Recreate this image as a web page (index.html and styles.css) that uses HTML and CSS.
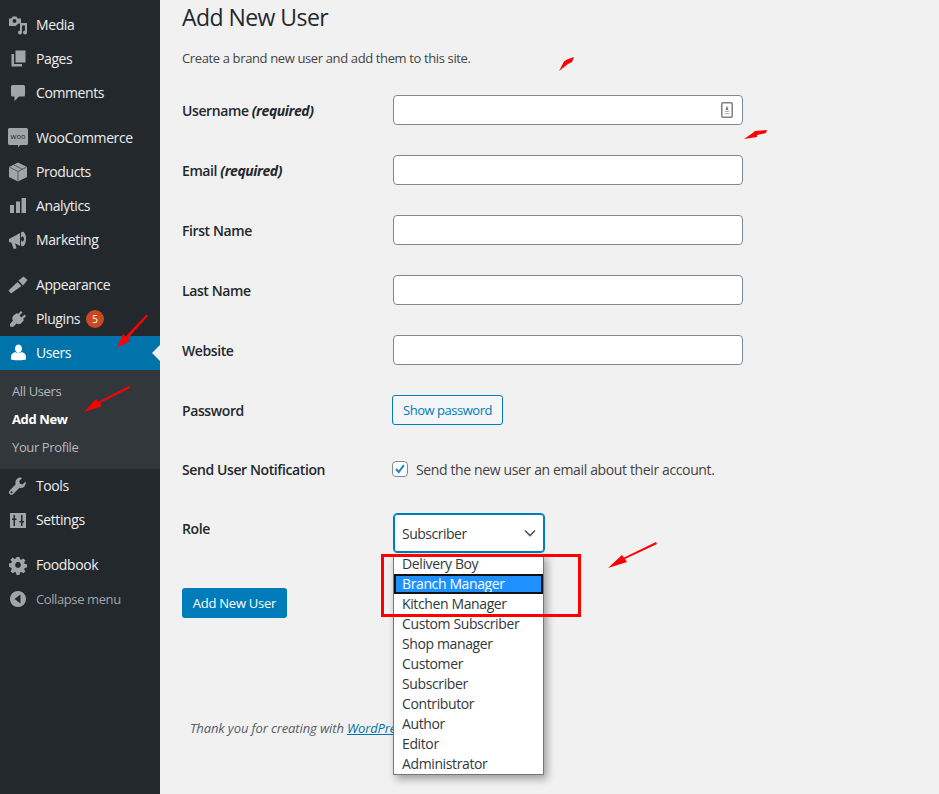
FILE: index.html
```html
<!DOCTYPE html>
<html lang="en">
<head>
<meta charset="utf-8">
<title>Add New User</title>
<link rel="stylesheet" href="styles.css">
</head>
<body>
<div class="page">
  <nav class="sidebar">
    <ul class="menu">
      <li class="item"><svg class="ic" viewBox="0 0 20 20"><path d="M1 3.500h2.500l1-2h4l1 2H13v5h-2.500L7 11.500V11H1zM6.500 4a2 2 0 1 0 .01 0z" fill-rule="evenodd"/><path d="M12 8h7v9.500a2 2 0 1 1-2-2V10.500h-3v7a2 2 0 1 1-2-2z"/></svg>Media</li>
      <li class="item"><svg class="ic" viewBox="0 0 20 20"><path d="M7.500 1.500h10v12h-10z"/><path d="M3.500 5H6v10h8v2.500H3.500z"/></svg>Pages</li>
      <li class="item"><svg class="ic" viewBox="0 0 20 20"><path d="M4.500 2h11A1.500 1.500 0 0 1 17 3.500V12a1.500 1.500 0 0 1-1.500 1.500H11L6.500 18v-4.500h-2A1.500 1.500 0 0 1 3 12V3.500A1.500 1.500 0 0 1 4.500 2z"/></svg>Comments</li>
      <li class="item sep"><svg class="ic" viewBox="0 0 20 20"><path d="M1.500 0h17A1.500 1.500 0 0 1 20 1.500v14a1.500 1.500 0 0 1-1.500 1.500H12l-1.500 2.500L10 17H1.500A1.500 1.500 0 0 1 0 15.500v-14A1.500 1.500 0 0 1 1.500 0z"/><text class="woo" x="10" y="10.500" text-anchor="middle">woo</text></svg>WooCommerce</li>
      <li class="item"><svg class="ic" viewBox="0 0 20 20"><path d="M10 .5l9 4.500v10l-9 4.500-9-4.500V5z"/><path d="M1.500 5.200L10 9.500l8.500-4.300M10 9.500v10M6 3l8.500 4.200" fill="none" stroke="#23282d" stroke-width=".6"/></svg>Products</li>
      <li class="item"><svg class="ic" viewBox="0 0 20 20"><path d="M2 9h4v8H2zM8 5.500h4V17H8zM13.500 2H18v15h-4.500z"/></svg>Analytics</li>
      <li class="item"><svg class="ic" viewBox="0 0 20 20"><path d="M1 9l11-6v13L7 13.200l1.500 4.500-.5 1H5.500L3.500 12.800 1 12z"/><path d="M13 2.500a3.500 6.500 0 0 1 5 6.500 3.500 6.500 0 0 1-5 6.500zM14.500 6.500a1.500 2.500 0 1 0 .01 0z" fill-rule="evenodd"/></svg>Marketing</li>
      <li class="item sep"><svg class="ic" viewBox="0 0 20 20"><path d="M.5 15.500L9.500 7l4 4L3 18.500z"/><path d="M10.500 5.500L15.500 1.500 19.500 5 15 10.500z"/></svg>Appearance</li>
      <li class="item"><svg class="ic" viewBox="0 0 20 20"><path d="M13 2l1.500 1.500-3 3 2 2 3-3L18 7l-3 3 1 1-2.500 3a4 4 0 0 1-5 .5L5 18l-3-.5L2 15l3-3.500a4 4 0 0 1 .5-5L9 4l1 1z"/></svg>Plugins<span class="badge">5</span></li>
      <li class="item current"><svg class="ic" viewBox="0 0 20 20"><path d="M10.500 1.500a3.500 4.200 0 1 1-.01 0zM7.500 9C8.500 10.500 12.500 10.500 13.500 9 16.500 9.500 18 11.500 18 14v2.500c-1.500 1-14 1-15 0V14c0-2.500 1.500-4.500 4.500-5z"/></svg>Users<span class="caret"></span></li>
      <li class="sub">
        <a class="sub-link">All Users</a>
        <a class="sub-link on">Add New</a>
        <a class="sub-link">Your Profile</a>
      </li>
      <li class="item"><svg class="ic" viewBox="0 0 20 20"><path d="M17.500 5.500l-3 3-2.500-.8L11.200 5l3-3a5 5 0 0 0-6.500 6.300L1.700 14.500a2.500 2.500 0 0 0 3.600 3.500l6.200-6.200a5 5 0 0 0 6-6.300zM3.500 17.200a1 1 0 1 1 .01 0z" fill-rule="evenodd"/></svg>Tools</li>
      <li class="item"><svg class="ic" viewBox="0 0 20 20"><path d="M2 3h16v15H2zM5.500 5v3.500H4V10h1.500v6H7v-6h1.500V8.500H7V5zM13 5v6h-1.500v1.500H13V16h1.500v-3.500H16V11h-1.500V5z" fill-rule="evenodd"/></svg>Settings</li>
      <li class="item sep"><svg class="ic" viewBox="0 0 20 20"><path d="M8.300 1h3.400l.5 2.600 1.500.6 2.200-1.500 2.400 2.400-1.500 2.200.6 1.500 2.600.5v3.400l-2.600.5-.6 1.500 1.500 2.200-2.400 2.400-2.200-1.500-1.500.6-.5 2.600H8.300l-.5-2.600-1.500-.6-2.200 1.500-2.400-2.400 1.500-2.200-.6-1.500L0 11.700V8.300l2.600-.5.6-1.500-1.500-2.200 2.400-2.400 2.200 1.500 1.500-.6zM10 6.800a3.200 3.200 0 1 0 .01 0z" fill-rule="evenodd" transform="translate(1 1) scale(.9)"/></svg>Foodbook</li>
      <li class="item collapse"><svg class="ic" viewBox="0 0 20 20"><path d="M10 2a8 8 0 1 1-.01 0zM12.500 5.500L6.500 10l6 4.500z" fill-rule="evenodd"/></svg>Collapse menu</li>
    </ul>
  </nav>

  <main class="main">
    <h1 class="title">Add New User</h1>
    <p class="intro">Create a brand new user and add them to this site.</p>
    <form class="form">
      <div class="row"><span class="label">Username <em>(required)</em></span>
        <span class="field"><span class="text-box"><svg class="key" viewBox="0 0 12 16"><rect x=".8" y=".8" width="10.400" height="14.400" rx="1" fill="#fff" stroke="#808080" stroke-width="1.500"/><path d="M6 3.500l1.500 4.500h-3z" fill="#777"/><path d="M4 9.500h4M4 11.500h4" stroke="#aaa"/></svg></span></span></div>
      <div class="row"><span class="label">Email <em>(required)</em></span><span class="field"><span class="text-box"></span></span></div>
      <div class="row"><span class="label">First Name</span><span class="field"><span class="text-box"></span></span></div>
      <div class="row"><span class="label">Last Name</span><span class="field"><span class="text-box"></span></span></div>
      <div class="row"><span class="label">Website</span><span class="field"><span class="text-box"></span></span></div>
      <div class="row"><span class="label">Password</span><span class="field shift"><span class="btn-outline">Show password</span></span></div>
      <div class="row short"><span class="label flush">Send User Notification</span>
        <span class="field shift check-line"><span class="check"><svg viewBox="0 0 16 16"><path d="M3.500 8l3 3.500 6-8" fill="none" stroke="#1e8cbe" stroke-width="2.400"/></svg></span>Send the new user an email about their account.</span></div>
      <div class="row tall"><span class="label">Role</span>
        <span class="field"><span class="select">Subscriber<svg class="chev" viewBox="0 0 12 8"><path d="M1 1.500l5 5 5-5" fill="none" stroke="#555" stroke-width="1.600"/></svg></span></span></div>
    </form>
    <span class="btn-primary">Add New User</span>
    <p class="footer">Thank you for creating with <a class="foot-link">WordPress</a>.</p>
  </main>

  <ul class="dropdown">
    <li>Delivery Boy</li>
    <li class="sel">Branch Manager</li>
    <li>Kitchen Manager</li>
    <li>Custom Subscriber</li>
    <li>Shop manager</li>
    <li>Customer</li>
    <li>Subscriber</li>
    <li>Contributor</li>
    <li>Author</li>
    <li>Editor</li>
    <li>Administrator</li>
  </ul>
  <div class="redbox"></div>
  <svg class="marks" viewBox="0 0 939 794">
    <path d="M148 316L128 338l2.500 2.500L117 348l6-14 2.500 2.500L146.500 314.500z"/>
    <path d="M130 388L100 403l2 3L84 412l12-13 2 3L129 386z"/>
    <path d="M574 57L572 62L568 64L559 71L564 61.500L567 59.500z"/>
    <path d="M767 130L766 133L757 135L757 137L744 139L752 133.500L755 131z"/>
    <path d="M657 544L625 559l2 3-19 6 14-13 2 2.500L656 542z"/>
  </svg>
</div>
</body>
</html>
```
FILE: styles.css
```css
* { box-sizing: border-box; }
html, body { margin: 0; height: 100%; overflow: hidden; }
body { background: #f1f1f1; font-family: "Open Sans", "Noto Sans", sans-serif; color: #444; }
.page { position: relative; display: flex; width: 939px; height: 794px; overflow: hidden; }

.sidebar { width: 160px; flex: none; background: #23282d; padding-top: 8px; }
.menu { list-style: none; margin: 0; padding: 0; }
.item { display: flex; align-items: center; height: 34px; padding: 0 0 2px 8px; font-size: 14px; letter-spacing: -.4px; color: #eee; position: relative; }
.item.sep { margin-top: 11px; }
.ic { width: 20px; height: 20px; margin: 2px 8px 0 0; fill: #a0a5aa; flex: none; }
.woo { fill: #23282d; font-size: 7.500px; letter-spacing: 0; }
.badge { width: 18px; height: 18px; margin: 2px 0 0 6px; border-radius: 50%; background: #ca4a1f; color: #fff; font-size: 10px; line-height: 18px; text-align: center; letter-spacing: 0; }
.current { background: #0073aa; color: #fff; font-weight: 500; }
.current .ic { fill: #fff; }
.caret { position: absolute; right: 0; top: 9px; border: 8px solid transparent; border-left: 0; border-right-color: #f1f1f1; }
.sub { background: #32373c; padding: 7px 0 8px; }
.sub-link { display: block; height: 28px; line-height: 28px; padding-left: 12px; font-size: 13px; letter-spacing: -.38px; color: #b4b9be; }
.sub-link.on { color: #fff; font-weight: 700; }
.collapse { color: #a0a5aa; font-size: 13px; padding-bottom: 0; }
.collapse .ic { margin-top: 0; }

.main { flex: 1; padding-left: 22px; }
.title { margin: 3px 0 0; font-size: 23px; line-height: 29px; font-weight: 400; color: #23282d; letter-spacing: -.55px; }
.intro { margin: 17px 0 0; font-size: 13px; line-height: 18px; letter-spacing: -.37px; }
.form { display: flex; flex-direction: column; gap: 30px; margin-top: 28px; }
.row { display: flex; align-items: center; height: 30px; }
.row.short { height: 28px; }
.row.tall { height: 40px; align-items: flex-start; }
.row.tall .label { padding-top: 6px; }
.label { width: 211px; flex: none; font-size: 14px; font-weight: 560; color: #23282d; letter-spacing: -.4px; padding-top: 1px; }
.label.flush { padding-top: 0; }
.label em { font-style: italic; font-weight: 700; letter-spacing: -.45px; }
.field { display: flex; }
.field.shift { margin-left: -1px; }
.text-box { position: relative; display: block; width: 350px; height: 30px; background: #fff; border: 1px solid #7e8993; border-radius: 4px; }
.key { position: absolute; right: 9px; top: 6px; width: 12px; height: 16px; }
.btn-outline { height: 30px; padding: 0 10px; border: 1px solid #007cba; border-radius: 3px; background: #f3f5f6; color: #007cba; font-size: 13px; line-height: 28px; letter-spacing: -.47px; }
.check-line { align-items: center; font-size: 14px; letter-spacing: -.37px; color: #444; }
.check { width: 16px; height: 16px; margin-right: 8px; background: #fff; border: 1px solid #7e8993; border-radius: 4px; }
.check svg { display: block; width: 14px; height: 14px; }
.select { display: flex; align-items: center; justify-content: space-between; width: 152px; height: 40px; padding: 0 8px; background: #fff; border: 1px solid #007cba; border-radius: 4px; box-shadow: inset 0 0 0 1px #007cba; color: #32373c; font-size: 14px; letter-spacing: -.5px; }
.chev { width: 12px; height: 8px; }
.btn-primary { display: block; width: 105px; height: 30px; margin-top: 35px; background: #007cba; border-radius: 3px; color: #fff; font-size: 13px; line-height: 30px; text-align: center; letter-spacing: -.25px; }
.footer { margin: 100px 0 0 8px; font-size: 13px; font-style: italic; line-height: 20px; letter-spacing: -.12px; color: #555d66; }
.foot-link { color: #0073aa; text-decoration: underline; }

.dropdown { position: absolute; left: 393px; top: 554px; width: 151px; height: 221px; margin: 0; padding: 0; list-style: none; background: #fff; border: 1px solid #767676; border-top: 0; box-shadow: 3px 4px 8px rgba(0,0,0,.35); font-size: 14px; letter-spacing: -.38px; color: #32373c; }
.dropdown li { height: 20px; line-height: 20px; padding-left: 8px; }
.dropdown .sel { background: #1e90ff; color: #fff; outline: 2px solid #111; outline-offset: -2px; }
.redbox { position: absolute; left: 381px; top: 554px; width: 200px; height: 63px; border: 3px solid #f00; }
.marks { position: absolute; left: 0; top: 0; width: 939px; height: 794px; fill: #f00; pointer-events: none; }
```
